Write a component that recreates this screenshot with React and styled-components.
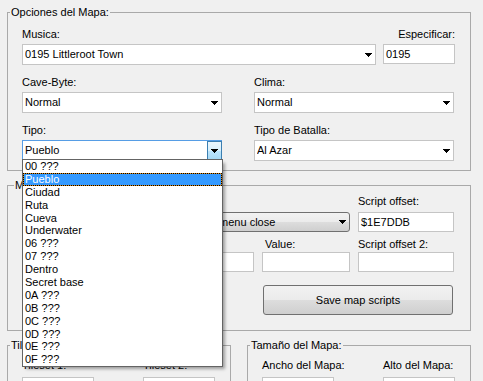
import React from "react";
import styled, { createGlobalStyle } from "styled-components";

const GlobalStyle = createGlobalStyle`
  html, body {
    margin: 0;
    padding: 0;
    background: #f0f0f0;
  }
  body {
    font-family: "Liberation Sans", Arial, sans-serif;
    font-size: 11px;
    color: #000;
  }
  * {
    box-sizing: border-box;
  }
`;

const Page = styled.div`
  width: 483px;
  height: 381px;
  overflow: hidden;
  padding: 6px 0 0 7px;
  display: flex;
  flex-direction: column;
  gap: 8px;
`;

const GroupBox = styled.fieldset`
  margin: 0;
  padding: 0;
  min-width: 0;
  width: ${(p) => p.$w}px;
  border: 1px solid #a9a9a9;
  flex-shrink: 0;
`;

const Caption = styled.legend`
  margin-left: ${(p) => p.$indent || 2}px;
  padding: 0 1px;
  font-size: 11px;
  line-height: 13px;
  white-space: nowrap;
`;

const OptionsBody = styled.div`
  display: flex;
  flex-direction: column;
  gap: 11px;
  padding: 9px 0 9px 14px;
`;

const Row = styled.div`
  display: grid;
  grid-template-columns: ${(p) => p.$cols};
  column-gap: ${(p) => p.$gap}px;
`;

const Field = styled.div`
  position: relative;
  display: flex;
  flex-direction: column;
`;

const Label = styled.div`
  height: 13px;
  line-height: 13px;
  margin-bottom: ${(p) => (p.$mb === undefined ? 3 : p.$mb)}px;
  padding-left: ${(p) => p.$indent || 0}px;
  text-align: ${(p) => (p.$right ? "right" : "left")};
  white-space: nowrap;
  align-self: ${(p) => p.$align || "stretch"};
  grid-column: ${(p) => p.$col || "auto"};
`;

const Combo = styled.div`
  height: 21px;
  display: flex;
  align-items: center;
  background: #fff;
  border: 1px solid ${(p) => (p.$focused ? "#569de5" : "#c5c5c5")};
  padding-left: 2px;
`;

const ComboText = styled.span`
  flex: 1;
  white-space: nowrap;
  overflow: hidden;
  line-height: 13px;
`;

const ArrowBox = styled.span`
  width: 14px;
  height: 100%;
  flex-shrink: 0;
  display: flex;
  align-items: center;
  justify-content: center;
`;

const DropButton = styled.span`
  width: 15px;
  height: 100%;
  display: flex;
  align-items: center;
  justify-content: center;
  border: 1px solid #3c7fb1;
  margin-right: -1px;
  background: linear-gradient(#eaf6fd 0%, #d9f0fc 50%, #bee6fd 50%, #a7d9f5 100%);
`;

const TextBox = styled.div`
  height: 20px;
  line-height: 18px;
  background: #fff;
  border: 1px solid #c5c5c5;
  padding-left: 2px;
  white-space: nowrap;
  align-self: ${(p) => p.$align || "stretch"};
  grid-column: ${(p) => p.$col || "auto"};
`;

const ButtonCombo = styled.div`
  grid-column: 1 / 4;
  grid-row: 2;
  align-self: end;
  height: 20px;
  display: flex;
  align-items: center;
  border: 1px solid #707070;
  border-radius: 3px;
  padding-left: 1px;
  background: linear-gradient(#f2f2f2 0%, #ebebeb 50%, #dddddd 50%, #cfcfcf 100%);
`;

const PushButton = styled.div`
  grid-column: 3 / 5;
  align-self: end;
  height: 30px;
  margin: 0 1px;
  display: flex;
  align-items: center;
  justify-content: center;
  border: 1px solid #707070;
  border-radius: 3px;
  background: linear-gradient(#f2f2f2 0%, #ebebeb 50%, #dddddd 50%, #cfcfcf 100%);
`;

const ScriptGrid = styled.div`
  display: grid;
  grid-template-columns: 136px 88px 88px 96px;
  grid-template-rows: 16px 21px 20px 20px 43px;
  column-gap: 8px;
  padding: 3px 0 15px 14px;
`;

const BottomRow = styled.div`
  display: flex;
  gap: 16px;
`;

const SizeGrid = styled.div`
  display: grid;
  grid-template-columns: 72px 72px;
  column-gap: 49px;
  padding: 7px 0 12px 14px;
`;

const DropList = styled.div`
  position: absolute;
  top: 35px;
  left: 0;
  width: 201px;
  height: 208px;
  overflow: hidden;
  background: #fff;
  border: 1px solid #646464;
  box-shadow: 3px 3px 3px -1px rgba(0, 0, 0, 0.35);
  z-index: 10;
`;

const DropItem = styled.div`
  height: 12.9px;
  line-height: 12.9px;
  padding-left: 2px;
  white-space: nowrap;
  ${(p) =>
    p.$selected &&
    `
    background: #3399ff;
    color: #fff;
    border: 1px solid #d98a1a;
    outline: 1px dotted #000;
    outline-offset: -1px;
    padding-left: 1px;
    line-height: 10.9px;
  `}
`;

const Arrow = () => (
  <svg width="7" height="4" viewBox="0 0 7 4">
    <path d="M0 0h7v1H0zM1 1h5v1H1zM2 2h3v1H2zM3 3h1v1H3z" fill="#000" />
  </svg>
);

const Select = ({ value }) => (
  <Combo>
    <ComboText>{value}</ComboText>
    <ArrowBox>
      <Arrow />
    </ArrowBox>
  </Combo>
);

const tipos = [
  "00 ???",
  "Pueblo",
  "Ciudad",
  "Ruta",
  "Cueva",
  "Underwater",
  "06 ???",
  "07 ???",
  "Dentro",
  "Secret base",
  "0A ???",
  "0B ???",
  "0C ???",
  "0D ???",
  "0E ???",
  "0F ???",
];

export default function App() {
  return (
    <>
      <GlobalStyle />
      <Page>
        <GroupBox $w={464}>
          <Caption>Opciones del Mapa:</Caption>
          <OptionsBody>
            <Row $cols="354px 72px" $gap={7}>
              <Field>
                <Label>Musica:</Label>
                <Select value="0195 Littleroot Town" />
              </Field>
              <Field>
                <Label $right>Especificar:</Label>
                <TextBox>0195</TextBox>
              </Field>
            </Row>
            <Row $cols="200px 200px" $gap={32}>
              <Field>
                <Label>Cave-Byte:</Label>
                <Select value="Normal" />
              </Field>
              <Field>
                <Label>Clima:</Label>
                <Select value="Normal" />
              </Field>
            </Row>
            <Row $cols="200px 200px" $gap={32}>
              <Field>
                <Label>Tipo:</Label>
                <Combo $focused>
                  <ComboText>Pueblo</ComboText>
                  <DropButton>
                    <Arrow />
                  </DropButton>
                </Combo>
                <DropList>
                  {tipos.map((t, i) => (
                    <DropItem key={t} $selected={i === 1}>
                      {t}
                    </DropItem>
                  ))}
                </DropList>
              </Field>
              <Field>
                <Label>Tipo de Batalla:</Label>
                <Select value="Al Azar" />
              </Field>
            </Row>
          </OptionsBody>
        </GroupBox>

        <GroupBox $w={464}>
          <Caption $indent={6}>Map Scripts:</Caption>
          <ScriptGrid>
            <Label $col={4}>Script offset:</Label>
            <ButtonCombo>
              <ComboText>06: Handler for entering the map/not on menu close</ComboText>
              <ArrowBox>
                <Arrow />
              </ArrowBox>
            </ButtonCombo>
            <TextBox $align="end">$1E7DDB</TextBox>
            <Label $align="end" $mb={1} $indent={3} $col={3}>Value:</Label>
            <Label $align="end" $mb={1}>Script offset 2:</Label>
            <TextBox $col={2}></TextBox>
            <TextBox $col={3}></TextBox>
            <TextBox $col={4}></TextBox>
            <PushButton>Save map scripts</PushButton>
          </ScriptGrid>
        </GroupBox>

        <BottomRow>
          <GroupBox $w={224}>
            <Caption>Tilesets:</Caption>
            <SizeGrid>
              <Label $mb={5}>Tileset 1:</Label>
              <Label $mb={5}>Tileset 2:</Label>
              <TextBox></TextBox>
              <TextBox></TextBox>
            </SizeGrid>
          </GroupBox>
          <GroupBox $w={224}>
            <Caption>Tamaño del Mapa:</Caption>
            <SizeGrid>
              <Label $mb={5}>Ancho del Mapa:</Label>
              <Label $mb={5}>Alto del Mapa:</Label>
              <TextBox></TextBox>
              <TextBox></TextBox>
            </SizeGrid>
          </GroupBox>
        </BottomRow>
      </Page>
    </>
  );
}
